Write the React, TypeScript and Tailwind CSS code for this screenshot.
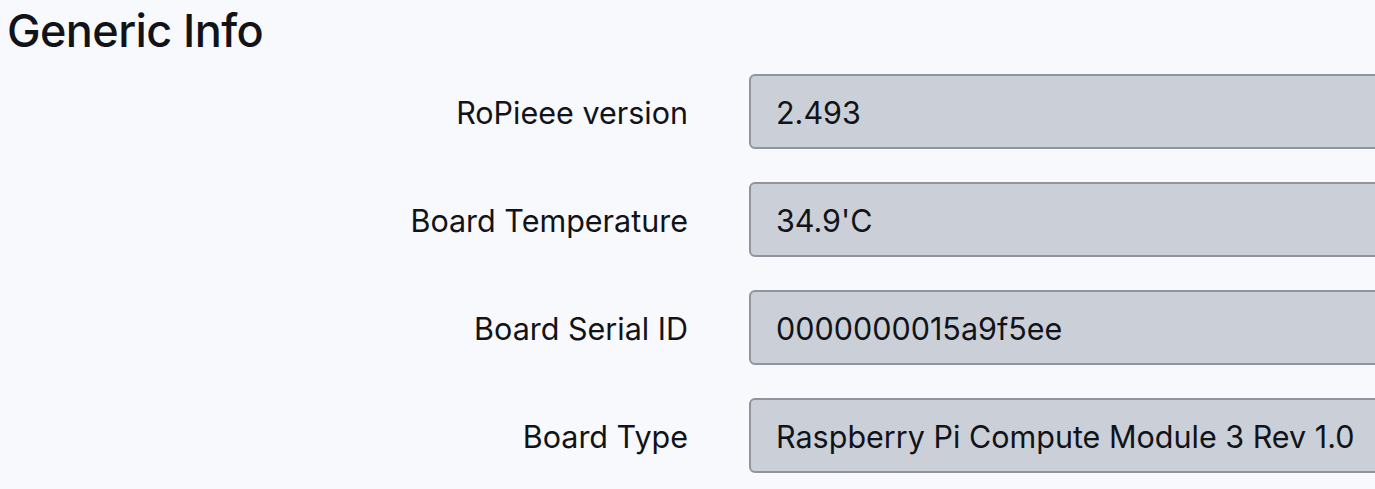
const rows = [
  { label: 'RoPieee version', value: '2.493' },
  { label: 'Board Temperature', value: "34.9'C" },
  { label: 'Board Serial ID', value: '0000000015a9f5ee' },
  { label: 'Board Type', value: 'Raspberry Pi Compute Module 3 Rev 1.0' },
];

export default function App() {
  return (
    <div className="min-h-screen w-full overflow-hidden bg-[#f8f9fc] text-[#111318] font-['Inter',sans-serif]">
      {/* Section header */}
      <h2 className="pl-[7px] pt-[6px] text-[45px] leading-[50px] font-medium tracking-[-0.6px]">Generic Info</h2>

      {/* Info rows */}
      <div className="mt-[18px] flex flex-col gap-[33px]">
        {rows.map((row) => (
          <div key={row.label} className="flex items-center">
            <label className="w-[688px] shrink-0 pt-[3px] text-right text-[30.5px]">{row.label}</label>
            <div className="ml-[61px] h-[75px] w-[700px] shrink-0 flex items-center rounded-[6px] border-2 border-[#8e959f] bg-[#cbd0d8] pl-[25px] pt-[2px] text-[30.5px]">
              {row.value}
            </div>
          </div>
        ))}
      </div>
    </div>
  );
}
